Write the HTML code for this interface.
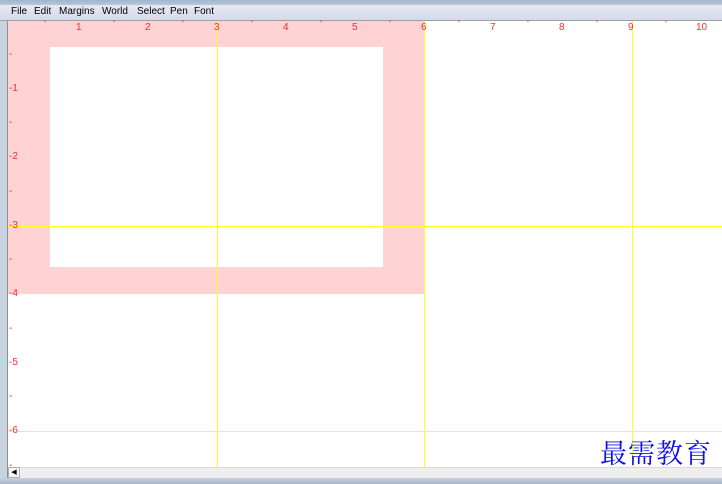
<!DOCTYPE html>
<html><head><style>
body{margin:0;width:722px;height:484px;overflow:hidden;background:#fff;font-family:"Liberation Sans",sans-serif;position:relative}
.a{position:absolute}
.t{position:absolute;color:#f03030;font-size:10px;line-height:10px}
.m{position:absolute;top:6px;font-size:10px;color:#000}
.y{position:absolute;background:#ffff20}
</style></head><body>
<div class="a" style="left:0;top:0;width:722px;height:5px;background:linear-gradient(#9fb4cc,#b9c8d8)"></div>
<div class="a" style="left:0;top:5px;width:722px;height:15px;background:linear-gradient(#e6e9f3,#d5dbec)"></div>
<div class="a" style="left:0;top:20px;width:722px;height:1px;background:#a0a0a0"></div>
<span class="m" style="left:11px">File</span><span class="m" style="left:34px">Edit</span><span class="m" style="left:59px">Margins</span><span class="m" style="left:102px">World</span><span class="m" style="left:137px">Select</span><span class="m" style="left:170px">Pen</span><span class="m" style="left:194px">Font</span>
<div class="a" style="left:0;top:21px;width:8px;height:463px;background:#c8d3df;border-right:1px solid #8a8f96;box-sizing:border-box"></div>
<div class="a" style="left:8px;top:21px;width:416px;height:273px;background:#ffd3d3"></div>
<div class="a" style="left:50px;top:47px;width:333px;height:220px;background:#fff"></div>
<div class="y" style="left:217px;top:21px;width:1px;height:446px"></div>
<div class="y" style="left:424px;top:21px;width:1px;height:446px"></div>
<div class="y" style="left:632px;top:21px;width:1px;height:446px"></div>
<div class="y" style="left:8px;top:226px;width:714px;height:1px"></div>
<div class="y" style="left:8px;top:431px;width:714px;height:1px"></div>
<span class="t" style="left:76px;top:23px">1</span><span class="t" style="left:145px;top:23px">2</span><span class="t" style="left:214px;top:23px">3</span><span class="t" style="left:283px;top:23px">4</span><span class="t" style="left:352px;top:23px">5</span><span class="t" style="left:421px;top:23px">6</span><span class="t" style="left:490px;top:23px">7</span><span class="t" style="left:559px;top:23px">8</span><span class="t" style="left:628px;top:23px">9</span><span class="t" style="left:696px;top:23px">10</span>
<span class="t" style="left:44px;top:20px">'</span><span class="t" style="left:113px;top:20px">'</span><span class="t" style="left:182px;top:20px">'</span><span class="t" style="left:251px;top:20px">'</span><span class="t" style="left:320px;top:20px">'</span><span class="t" style="left:389px;top:20px">'</span><span class="t" style="left:458px;top:20px">'</span><span class="t" style="left:527px;top:20px">'</span><span class="t" style="left:596px;top:20px">'</span><span class="t" style="left:665px;top:20px">'</span>
<span class="t" style="left:9px;top:84px">-1</span><span class="t" style="left:9px;top:152px">-2</span><span class="t" style="left:9px;top:221px">-3</span><span class="t" style="left:9px;top:289px">-4</span><span class="t" style="left:9px;top:358px">-5</span><span class="t" style="left:9px;top:426px">-6</span>
<span class="t" style="left:9px;top:50px">-</span><span class="t" style="left:9px;top:118px">-</span><span class="t" style="left:9px;top:187px">-</span><span class="t" style="left:9px;top:255px">-</span><span class="t" style="left:9px;top:324px">-</span><span class="t" style="left:9px;top:392px">-</span><span class="t" style="left:9px;top:461px">-</span>
<div class="a" style="left:8px;top:467px;width:714px;height:11px;background:#eeeeee;border-top:1px solid #d8d8d8;box-sizing:border-box"></div>
<div class="a" style="left:8px;top:467px;width:12px;height:11px;background:#f6f6f6;border:1px solid #b0b0b0;box-sizing:border-box;font-size:7px;line-height:9px;text-align:center">◀</div>
<div class="a" style="left:0;top:478px;width:722px;height:6px;background:linear-gradient(#c8d3df,#a9b7c8)"></div>
<div class="a" style="left:600px;top:436px;font-family:'Noto Serif CJK SC',serif;font-size:27px;color:#1010e0;letter-spacing:1px;line-height:32px">最需教育</div>
</body></html>
